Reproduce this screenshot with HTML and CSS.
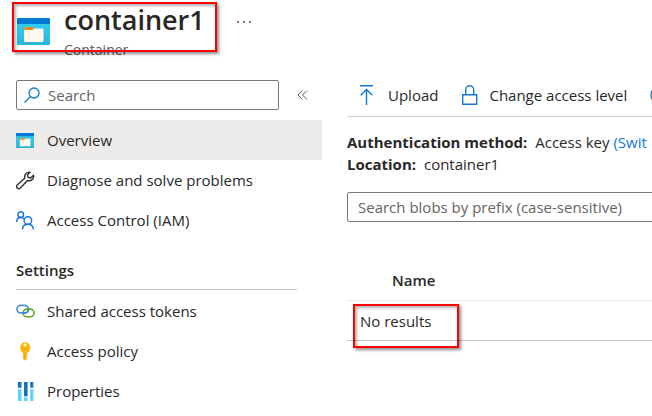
FILE: index.html
```html
<!DOCTYPE html>
<html lang="en">
<head>
<meta charset="utf-8">
<title>container1</title>
<link rel="stylesheet" href="styles.css">
</head>
<body>
<svg class="defs" aria-hidden="true">
  <defs>
    <linearGradient id="cyan" x1="0" y1="0" x2="0" y2="1"><stop offset="0" stop-color="#32d4f5"/><stop offset="1" stop-color="#2bb6d6"/></linearGradient>
    <symbol id="container" viewBox="0 0 33 27" preserveAspectRatio="none">
      <rect width="33" height="27" rx="1" fill="url(#cyan)"/>
      <path d="M0 6V1a1 1 0 0 1 1-1h31a1 1 0 0 1 1 1v5z" fill="#0078d4"/>
      <path d="M7 10.500a1.500 1.500 0 0 1 1.500-1.500h6a1.500 1.500 0 0 1 1.500 1.500h9.500a1 1 0 0 1 1 1V23a1 1 0 0 1-1 1H8a1 1 0 0 1-1-1z" fill="#fff8ef"/>
      <path d="M7 12v-1.500A1.500 1.500 0 0 1 8.500 9h6.500a1.500 1.500 0 0 1 0 3z" fill="#f08c1e"/>
    </symbol>
  </defs>
</svg>
<header class="header">
  <div class="heading">
    <svg class="heading-icon"><use href="#container"/></svg>
    <div class="heading-text">
      <h1>container1</h1>
      <p>Container</p>
    </div>
    <span class="mark mark-title"></span>
  </div>
  <button class="more" aria-label="More">
    <svg width="16" height="4" viewBox="0 0 16 4" fill="#444"><circle cx="2" cy="2" r="1"/><circle cx="8" cy="2" r="1"/><circle cx="14" cy="2" r="1"/></svg>
  </button>
</header>
<div class="columns">
  <aside class="sidebar">
    <div class="search-row">
      <label class="search">
        <svg width="16" height="16" viewBox="0 0 16 16" fill="none" stroke="#0f78d4" stroke-width="1.300"><circle cx="10" cy="6" r="5"/><path d="M6.400 9.600.5 15.500"/></svg>
        <input type="text" placeholder="Search" aria-label="Search">
      </label>
      <button class="collapse" aria-label="Collapse">
        <svg width="11" height="10" viewBox="0 0 11 10" fill="none" stroke="#605e5c"><path d="M5.500.5 1 5l4.500 4.500M10 .5 5.500 5l4.500 4.500"/></svg>
      </button>
    </div>
    <nav>
      <a class="item selected" href="#"><svg class="icon" viewBox="0 0 19 19"><use href="#container" x="0" y="2" width="18" height="15"/></svg>Overview</a>
      <a class="item" href="#"><svg class="icon" viewBox="0 0 20 20" fill="none" stroke="#323130" stroke-width="1.500" stroke-linejoin="round"><path d="M14.800 1.300a4.700 4.700 0 0 0-5.400 6L1.300 14.800a2.200 2.200 0 0 0 3.200 3.200l7.700-8a4.700 4.700 0 0 0 6.200-5.600l-3 2.900-2.700-.6-.7-2.500z"/></svg>Diagnose and solve problems</a>
      <a class="item" href="#"><svg class="icon" viewBox="0 0 20 20" fill="none" stroke="#1b70dc" stroke-width="1.500"><circle cx="5" cy="3.800" r="3"/><path d="M.7 11.500C.8 8.500 2.500 6.800 5 6.800c1.500 0 2.600.5 3.300 1.400"/><circle cx="12.500" cy="10" r="4"/><path d="M6.700 19.500c.2-3.300 2.400-5.500 5.800-5.500s5.600 2.200 5.800 5.500"/></svg>Access Control (IAM)</a>
      <h2>Settings</h2>
      <a class="item" href="#"><svg class="icon" viewBox="0 0 20 20" fill="none" stroke-width="1.700"><rect x="1" y="3.500" width="12" height="8" rx="4" stroke="#4a90e2"/><rect x="7.500" y="7.500" width="11.500" height="8" rx="4" stroke="#62a825"/><path d="M7 11.500h2a4 4 0 0 0 4-4" stroke="#2f83d8"/></svg>Shared access tokens</a>
      <a class="item" href="#"><svg class="icon" viewBox="0 0 20 20"><path d="M9.500 0a6 6 0 0 1 2.500 11.200V13l-1 1 1 1-1 1 1 1-2.500 2.700L7.500 17.500V11.200A6 6 0 0 1 9.500 0z" fill="#fdb913"/><circle cx="9.500" cy="3.200" r="1.500" fill="#fff3cd"/><path d="M6.500 7.200h6M8.800 12v5.500" stroke="#e79a00" stroke-width="1"/></svg>Access policy</a>
      <a class="item" href="#"><svg class="icon" viewBox="0 0 20 20"><path d="M2 0h4v6H2zM8.500 0h4v15h-4zM15 0h3.500v6H15z" fill="#0f6cbd"/><path d="M2 7.500h4V20H2zM8.500 16h4v4h-4zM15 7.500h3.500V20H15z" fill="#55d5f5"/><path d="M5 0h1v20H5zM11.500 0h1v20h-1zM17.500 0h1v20h-1z" fill="#fff" opacity=".4"/></svg>Properties</a>
    </nav>
  </aside>
  <main class="main">
    <div class="toolbar">
      <button class="command"><svg width="20" height="20" viewBox="0 0 20 20" fill="none" stroke="#0f78d4" stroke-width="1.400"><path d="M1 .7h13M7.500 20V4.500M1.700 10.200l5.800-5.700 5.800 5.700"/></svg>Upload</button>
      <button class="command"><svg width="20" height="20" viewBox="0 0 20 20" fill="none" stroke="#0f78d4" stroke-width="1.400"><path d="M2.700 9.700h14v9.600h-14zM5.700 9.700V4.700a4 4 0 0 1 8 0v5"/></svg>Change access level</button>
      <button class="command" aria-label="Refresh"><svg width="20" height="20" viewBox="0 0 20 20" fill="none" stroke="#0f78d4" stroke-width="1.400"><circle cx="10" cy="10" r="8"/></svg></button>
    </div>
    <div class="details">
      <div><b>Authentication method:</b> Access key <a href="#">(Swit</a></div>
      <div><b>Location:</b> container1</div>
    </div>
    <input class="prefix" type="text" placeholder="Search blobs by prefix (case-sensitive)" aria-label="Search blobs by prefix">
    <table>
      <thead><tr><th>Name</th></tr></thead>
      <tbody><tr><td><span class="result">No results<span class="mark mark-result"></span></span></td></tr></tbody>
    </table>
  </main>
</div>
</body>
</html>
```
FILE: styles.css
```css
* { box-sizing: border-box; }
body {
  margin: 0;
  background: #fff;
  color: #292827;
  font: 15px/22px "Open Sans", "Noto Sans", sans-serif;
  overflow: hidden;
}
.defs { position: absolute; width: 0; height: 0; }
svg { flex: none; display: block; }
button { border: 0; padding: 0; background: none; font: inherit; color: inherit; }
a { color: #0f78d4; text-decoration: none; }

.header { display: flex; height: 80px; padding-left: 17px; gap: 31px; }
.heading { position: relative; display: flex; align-items: flex-start; gap: 14px; }
.heading-icon { width: 33px; height: 27px; margin-top: 18px; }
h1 { margin: 0; font-size: 27px; line-height: 40px; font-weight: 600; }
.heading-text p { margin: 0; font-size: 14px; line-height: 20px; color: #605e5c; }
.more { align-self: flex-start; margin-top: 20px; }

.mark { position: absolute; border: 2px solid #f00; box-shadow: 2px 2px 3px rgba(0, 0, 0, .45), inset 2px 2px 3px rgba(0, 0, 0, .3); pointer-events: none; }
.mark-title { inset: 2px -12px 28px -5px; }
.mark-result { inset: -7px -28px -17px -7px; }

.columns { display: flex; }
.sidebar { flex: none; width: 322px; }
.search-row { display: flex; align-items: center; gap: 18px; padding-left: 16px; margin-bottom: 10px; }
.search { display: flex; align-items: center; gap: 8px; width: 263px; height: 30px; padding: 0 7px; border: 1px solid #7a7876; border-radius: 2px; }
.search input { flex: 1; min-width: 0; padding: 0; border: 0; outline: 0; font: inherit; }
input::placeholder { color: #666462; opacity: 1; }
.item { display: flex; align-items: center; gap: 12px; height: 40px; padding-left: 16px; color: inherit; }
.selected { background: #edebe9; }
.icon { width: 19px; height: 19px; }
h2 { margin: 19px 25px 1px 16px; padding-bottom: 8px; border-bottom: 1px solid #c8c6c4; font-size: 15px; line-height: 22px; font-weight: 600; }

.main { flex: 1; min-width: 0; padding-left: 25px; white-space: nowrap; overflow: hidden; }
.toolbar { display: flex; gap: 22px; height: 37px; padding: 0 0 6px 12px; border-bottom: 1px solid #d2d0ce; }
.command { display: flex; align-items: center; gap: 9px; flex: none; }
.details { padding: 14px 0 17px; }
.details b { margin-right: 4px; }
.prefix { display: block; width: calc(100% + 8px); height: 30px; padding: 0 10px; border: 1px solid #7a7876; border-radius: 2px; font: inherit; }
table { width: 100%; margin-top: 38px; border-collapse: collapse; }
th, td { height: 40px; text-align: left; }
th { padding: 0 0 0 45px; font-weight: 600; border-bottom: 1px solid #edebe9; }
td { padding: 2px 0 0 13px; border-bottom: 1px solid #c8c6c4; }
.result { position: relative; }
```
